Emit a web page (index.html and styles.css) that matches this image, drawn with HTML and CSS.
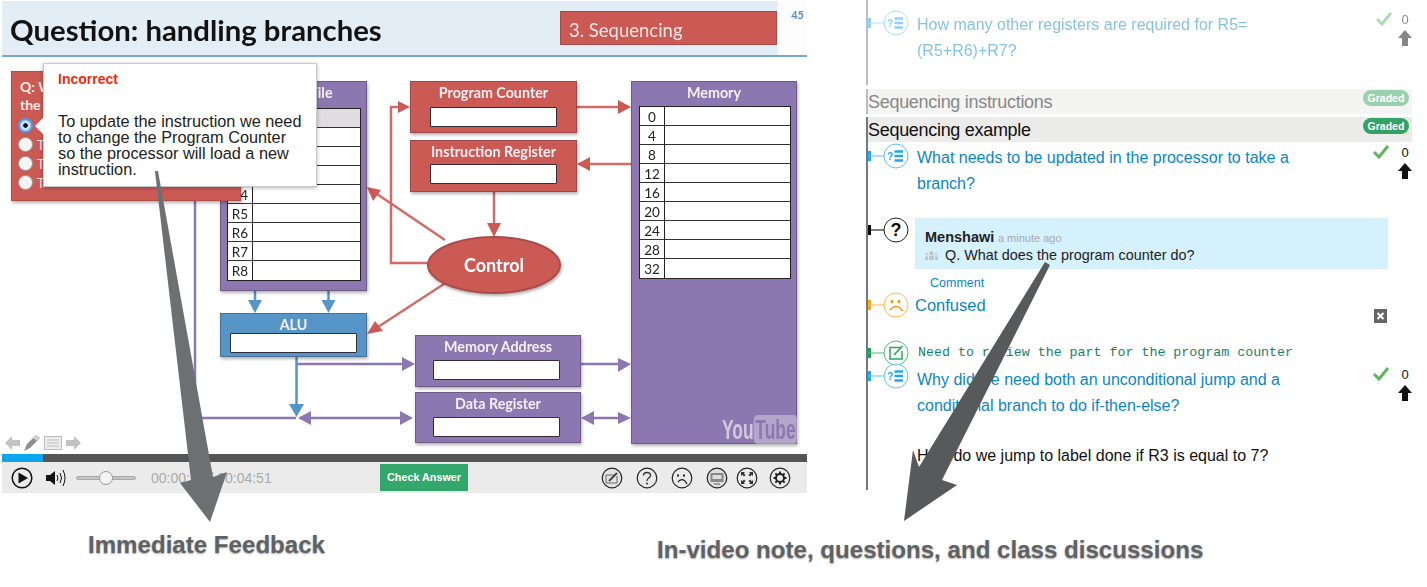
FILE: index.html
```html
<!DOCTYPE html>
<html lang="en">
<head>
    <meta charset="UTF-8">
    <meta name="viewport" content="width=device-width, initial-scale=1.0">
    <title>In-video quizzes</title>
    <link rel="stylesheet" href="styles.css">
</head>
<body>
<div class="page">
    <div class="top">
        <!-- Video player with the lecture slide -->
        <div class="player">
            <div class="slide">
                <div class="slide-head">
                    <h1 class="slide-title">Question: handling branches</h1>
                    <div class="slide-tag">3. Sequencing</div>
                    <div class="slide-num">45</div>
                </div>

                <!-- Diagram: wires first, nodes on top -->
                <svg class="wires" width="807" height="454" viewBox="0 0 807 454">
                    <g fill="none" stroke="#cf6c68" stroke-width="2.5">
                        <path d="M577 107H620"/>
                        <path d="M631 164H590"/>
                        <path d="M494 192V226"/>
                        <path d="M430 263H391V107H400"/>
                        <path d="M445 240L377 194"/>
                        <path d="M447 282L378 327"/>
                    </g>
                    <g fill="#cb5a55">
                        <path d="M631 107L618 100V114Z"/>
                        <path d="M577 164L590 157V171Z"/>
                        <path d="M494 237L487 223H501Z"/>
                        <path d="M410 107L398 101V113Z"/>
                        <path d="M367 187L381 190L373 201Z"/>
                        <path d="M367 334L375 321L383 331Z"/>
                    </g>
                    <g fill="none" stroke="#5595c8" stroke-width="2.5">
                        <path d="M255 291V304"/>
                        <path d="M328.500 291V304"/>
                        <path d="M296.500 357V406"/>
                    </g>
                    <g fill="#5595c8">
                        <path d="M255 313L248 300H262Z"/>
                        <path d="M328.500 313L321.500 300H335.500Z"/>
                        <path d="M296.500 417L289 404H304Z"/>
                    </g>
                    <g fill="none" stroke="#8d77b0" stroke-width="2.5">
                        <path d="M195 200V418H296"/>
                        <path d="M297 364H405"/>
                        <path d="M300 418H405"/>
                        <path d="M581 364H620"/>
                        <path d="M590 418H620"/>
                    </g>
                    <g fill="#8d77b0">
                        <path d="M415 364L402 357V371Z"/>
                        <path d="M298 418L311 411V425Z"/>
                        <path d="M413 418L400 411V425Z"/>
                        <path d="M631 364L618 358V372Z"/>
                        <path d="M631 418L618 412V424Z"/>
                        <path d="M581 418L594 411V425Z"/>
                    </g>
                </svg>

                <div class="node node-file">
                    <div class="node-title">Register File</div>
                    <div class="regs regs-file">
                        <div class="reg reg-on"><span></span><i></i></div>
                        <div class="reg"><span></span><i></i></div>
                        <div class="reg"><span></span><i></i></div>
                        <div class="reg"><span></span><i></i></div>
                        <div class="reg"><span>R4</span><i></i></div>
                        <div class="reg"><span>R5</span><i></i></div>
                        <div class="reg"><span>R6</span><i></i></div>
                        <div class="reg"><span>R7</span><i></i></div>
                        <div class="reg"><span>R8</span><i></i></div>
                    </div>
                </div>
                <div class="node node-pc"><div class="node-title">Program Counter</div><div class="field"></div></div>
                <div class="node node-ir"><div class="node-title">Instruction Register</div><div class="field"></div></div>
                <div class="node node-alu"><div class="node-title">ALU</div><div class="field"></div></div>
                <div class="node node-ma"><div class="node-title">Memory Address</div><div class="field"></div></div>
                <div class="node node-dr"><div class="node-title">Data Register</div><div class="field"></div></div>
                <div class="control">Control</div>
                <div class="node node-mem">
                    <div class="node-title">Memory</div>
                    <div class="regs regs-mem">
                        <div class="reg"><span>0</span><i></i></div>
                        <div class="reg"><span>4</span><i></i></div>
                        <div class="reg"><span>8</span><i></i></div>
                        <div class="reg"><span>12</span><i></i></div>
                        <div class="reg"><span>16</span><i></i></div>
                        <div class="reg"><span>20</span><i></i></div>
                        <div class="reg"><span>24</span><i></i></div>
                        <div class="reg"><span>28</span><i></i></div>
                        <div class="reg"><span>32</span><i></i></div>
                    </div>
                </div>
                <div class="yt">You<span class="yt-tube">Tube</span></div>

                <!-- Quiz laid over the video -->
                <div class="quiz">
                    <p class="quiz-q">Q: W<br>the</p>
                    <div class="quiz-opt"><span class="radio radio-on"></span></div>
                    <div class="quiz-opt"><span class="radio"></span>T</div>
                    <div class="quiz-opt"><span class="radio"></span>T</div>
                    <div class="quiz-opt"><span class="radio"></span>T</div>
                </div>
                <div class="popover">
                    <div class="popover-title">Incorrect</div>
                    <p class="popover-body">To update the instruction we need to change the Program Counter so the processor will load a new instruction.</p>
                </div>

                <div class="annot">
                    <svg width="15" height="14" viewBox="0 0 15 14"><path d="M0 7L7 0V4H15V10H7V14Z" fill="#c2c2c2"/></svg>
                    <svg width="16" height="16" viewBox="0 0 16 16"><path d="M0 16L3 9L12 0L16 3L6 13Z" fill="#8f8f8f"/><path d="M9 3L12 0L16 3L13 6Z" fill="#d0d0d0"/></svg>
                    <svg width="18" height="14" viewBox="0 0 18 14"><rect x=".5" y=".5" width="17" height="13" fill="#eee" stroke="#bbb"/><path d="M3 4H15M3 7H15M3 10H15" stroke="#bbb"/></svg>
                    <svg width="15" height="14" viewBox="0 0 15 14"><path d="M15 7L8 0V4H0V10H8V14Z" fill="#c2c2c2"/></svg>
                </div>
            </div>

            <div class="progress"><div class="progress-done"></div></div>
            <div class="controls">
                <svg class="ctl-play" width="22" height="22" viewBox="0 0 22 22"><circle cx="11" cy="11" r="9.800" fill="none" stroke="#111" stroke-width="1.500"/><path d="M7.500 5.500L17 11L7.500 16.500Z" fill="#111"/></svg>
                <svg class="ctl-vol" width="21" height="18" viewBox="0 0 21 18"><path d="M0 6H4L9 2V16L4 12H0Z" fill="#111"/><path d="M11 6Q13 9 11 12M14 4Q17 9 14 14M17 1Q21 9 17 17" fill="none" stroke="#111"/></svg>
                <div class="slider"><div class="slider-thumb"></div></div>
                <div class="time">00:00:57 / 00:04:51</div>
                <div class="check-btn">Check Answer</div>
                <div class="ctl-icons">
                    <svg width="22" height="22" viewBox="0 0 22 22"><circle cx="11" cy="11" r="9.800" fill="#e4e4e4" stroke="#222" stroke-width="1.200"/><path d="M5 8H14M5 8V16H16V9" fill="none" stroke="#666"/><path d="M8 14L16 6" stroke="#444" stroke-width="2"/></svg>
                    <svg width="22" height="22" viewBox="0 0 22 22"><circle cx="11" cy="11" r="9.800" fill="none" stroke="#222" stroke-width="1.200"/><path d="M7.500 8.500C7.500 4.500 14.500 4.500 14.500 8.500C14.500 11 11 10.500 11 14" fill="none" stroke="#333" stroke-width="1.300"/><circle cx="11" cy="16.500" r="1" fill="#333"/></svg>
                    <svg width="22" height="22" viewBox="0 0 22 22"><circle cx="11" cy="11" r="9.800" fill="none" stroke="#222" stroke-width="1.200"/><path d="M7 7.500V9.500M13 7.500V9.500" stroke="#222" stroke-width="2"/><path d="M7 15Q10 11 14 14L16 17" fill="none" stroke="#222" stroke-width="1.300"/></svg>
                    <svg width="22" height="22" viewBox="0 0 22 22"><circle cx="11" cy="11" r="9.800" fill="#ddd" stroke="#222" stroke-width="1.200"/><rect x="4.500" y="6" width="13" height="9" fill="#888"/><rect x="6.500" y="8" width="9" height="4" fill="#ddd"/><path d="M8 17H14" stroke="#888" stroke-width="1.500"/></svg>
                    <svg class="ctl-tight" width="22" height="22" viewBox="0 0 22 22"><circle cx="11" cy="11" r="9.800" fill="none" stroke="#222" stroke-width="1.200"/><path d="M5 5H9L7.800 6.300L9.500 8L8 9.500L6.300 7.800L5 9ZM17 5V9L15.700 7.800L14 9.500L12.500 8L14.200 6.300L13 5ZM5 17V13L6.300 14.200L8 12.500L9.500 14L7.800 15.700L9 17ZM17 17H13L14.200 15.700L12.500 14L14 12.500L15.700 14.200L17 13Z" fill="#333"/></svg>
                    <svg class="ctl-gear" width="22" height="22" viewBox="0 0 22 22"><circle cx="11" cy="11" r="9.800" fill="none" stroke="#222" stroke-width="1.200"/><circle cx="11" cy="11" r="3.800" fill="none" stroke="#222" stroke-width="2.400"/><path d="M11 4.500V17.500M4.500 11H17.500M6.400 6.400L15.600 15.600M15.600 6.400L6.400 15.600" stroke="#222" stroke-width="2"/><circle cx="11" cy="11" r="3" fill="#ebebeb"/></svg>
                </div>
            </div>
        </div>

        <!-- Timeline of questions and notes -->
        <div class="timeline">
            <div class="section section-past">
                <div class="item item-first">
                    <svg class="marker" width="42" height="26" viewBox="0 0 42 26"><rect y="8" width="3" height="10" fill="#1ea7f5"/><path d="M0 13H16" stroke="#5cbcf5"/><circle cx="28" cy="13" r="12" fill="#fff" stroke="#5cbcf5"/><text x="19" y="17" class="mark-q">?</text><path d="M26.500 8.500H35M26.500 13H35M26.500 17.500H35" stroke="#1ea7f5" stroke-width="2.500"/></svg>
                    <div class="item-text">How many other registers are required for R5= (R5+R6)+R7?</div>
                    <div class="votes">
                        <div class="votes-top">
                            <svg width="18" height="16" viewBox="0 0 18 16"><path d="M2 8L7 13L16 2" fill="none" stroke="#62b45f" stroke-width="3"/></svg>
                            <span class="votes-num">0</span>
                        </div>
                        <svg width="14" height="18" viewBox="0 0 14 18"><path d="M7 1L14 9H10V17H4V9H0Z" fill="#111"/></svg>
                    </div>
                </div>
            </div>
            <div class="bar bar-past"><span>Sequencing instructions</span><span class="pill">Graded</span></div>

            <div class="section section-now">
                <div class="bar"><span>Sequencing example</span><span class="pill">Graded</span></div>
                <div class="item item-a">
                    <svg class="marker" width="42" height="26" viewBox="0 0 42 26"><rect y="8" width="3" height="10" fill="#1ea7f5"/><path d="M0 13H16" stroke="#5cbcf5"/><circle cx="28" cy="13" r="12" fill="#fff" stroke="#5cbcf5"/><text x="19" y="17" class="mark-q">?</text><path d="M26.500 8.500H35M26.500 13H35M26.500 17.500H35" stroke="#1ea7f5" stroke-width="2.500"/></svg>
                    <div class="item-text">What needs to be updated in the processor to take a branch?</div>
                    <div class="votes">
                        <div class="votes-top">
                            <svg width="18" height="16" viewBox="0 0 18 16"><path d="M2 8L7 13L16 2" fill="none" stroke="#62b45f" stroke-width="3"/></svg>
                            <span class="votes-num">0</span>
                        </div>
                        <svg width="14" height="18" viewBox="0 0 14 18"><path d="M7 1L14 9H10V17H4V9H0Z" fill="#111"/></svg>
                    </div>
                </div>

                <div class="item item-b">
                    <svg class="marker" width="42" height="26" viewBox="0 0 42 26"><rect y="8" width="3" height="10" fill="#000"/><path d="M0 13H16" stroke="#000"/><circle cx="28" cy="13" r="12" fill="#fff" stroke="#222"/><text x="28" y="19" class="mark-big">?</text></svg>
                    <div class="thread">
                        <div class="card">
                            <div><b class="card-name">Menshawi</b> <span class="card-time">a minute ago</span></div>
                            <div class="card-q">
                                <svg width="13" height="9" viewBox="0 0 13 9"><circle cx="6.500" cy="2" r="1.800" fill="#bcbcbc"/><circle cx="2" cy="3" r="1.500" fill="#cfcfcf"/><circle cx="11" cy="3" r="1.500" fill="#cfcfcf"/><path d="M4 9V4.500H9V9ZM0 9V5.500H3V9ZM10 9V5.500H13V9Z" fill="#c4c4c4"/></svg>
                                Q. What does the program counter do?
                            </div>
                        </div>
                        <div class="comment-link">Comment</div>
                    </div>
                </div>

                <div class="item item-c">
                    <svg class="marker" width="42" height="26" viewBox="0 0 42 26"><rect y="8" width="3" height="10" fill="#ffa514"/><path d="M0 13H16" stroke="#ffb84d"/><circle cx="28" cy="13" r="12" fill="#fff" stroke="#ffb84d"/><path d="M24 8V11M31 8V11" stroke="#f59a0c" stroke-width="2.400"/><path d="M22 18Q27 12 32 16L35 19" fill="none" stroke="#f59a0c" stroke-width="1.400"/></svg>
                    <div class="item-confused">Confused</div>
                    <div class="close-box">
                        <svg width="13" height="14" viewBox="0 0 13 14"><rect width="13" height="14" fill="#666"/><path d="M3.500 4L9.500 10M9.500 4L3.500 10" stroke="#fff" stroke-width="2"/></svg>
                    </div>
                </div>

                <div class="item item-d">
                    <svg class="marker" width="42" height="26" viewBox="0 0 42 26"><rect y="8" width="3" height="10" fill="#13a651"/><path d="M0 13H16" stroke="#4fbb7b"/><circle cx="28" cy="13" r="12" fill="#fff" stroke="#4fbb7b"/><path d="M32 7.500H22V19H34V11" fill="none" stroke="#2aa764" stroke-width="1.500"/><path d="M26 15L34.500 6" stroke="#2aa764" stroke-width="1.800"/></svg>
                    <div class="item-note">Need to review the part for the program counter</div>
                </div>

                <div class="item item-e">
                    <svg class="marker" width="42" height="26" viewBox="0 0 42 26"><rect y="8" width="3" height="10" fill="#1ea7f5"/><path d="M0 13H16" stroke="#5cbcf5"/><circle cx="28" cy="13" r="12" fill="#fff" stroke="#5cbcf5"/><text x="19" y="17" class="mark-q">?</text><path d="M26.500 8.500H35M26.500 13H35M26.500 17.500H35" stroke="#1ea7f5" stroke-width="2.500"/></svg>
                    <div class="item-text">Why did we need both an unconditional jump and a conditional branch to do if-then-else?</div>
                    <div class="votes">
                        <div class="votes-top">
                            <svg width="18" height="16" viewBox="0 0 18 16"><path d="M2 8L7 13L16 2" fill="none" stroke="#62b45f" stroke-width="3"/></svg>
                            <span class="votes-num">0</span>
                        </div>
                        <svg width="14" height="18" viewBox="0 0 14 18"><path d="M7 1L14 9H10V17H4V9H0Z" fill="#111"/></svg>
                    </div>
                </div>

                <div class="item-plain">How do we jump to label done if R3 is equal to 7?</div>
            </div>
        </div>
    </div>

    <div class="captions">
        <div class="caption caption-a">Immediate Feedback</div>
        <div class="caption caption-b">In-video note, questions, and class discussions</div>
    </div>

    <!-- Big annotation arrows drawn over everything -->
    <svg class="callouts" width="1427" height="587" viewBox="0 0 1427 587">
        <path d="M155 171L158 171L213 477L227 472L210 522L180 483L191 480Z" fill="#6c7073"/>
        <path d="M1045 262L1050 265L942 480L957 485L904 521L913 450L919 467Z" fill="#58595b"/>
    </svg>
</div>
</body>
</html>
```

FILE: styles.css
```css
body {
    margin: 0;
    background: #fff;
    font-family: "Liberation Sans", Arial, sans-serif;
    color: #111;
}

.page {
    position: relative;
    width: 1427px;
    height: 587px;
    overflow: hidden;
}

.top {
    display: flex;
    align-items: flex-start;
    height: 493px;
}

/* Player */
.player {
    width: 807px;
    flex: none;
}

.slide {
    position: relative;
    height: 454px;
    padding-top: 1px;
    box-sizing: border-box;
    overflow: hidden;
    font-family: Lato, "Open Sans", sans-serif;
}

/* the slide is a soft video frame, the quiz popover is not */
.slide-head,
.wires,
.node,
.control,
.yt {
    filter: blur(0.35px);
}

.slide-head {
    display: flex;
    align-items: flex-start;
    margin-left: 2px;
    height: 54px;
    border-bottom: 2px solid #78a6d0;
    background: linear-gradient(to right, #e3edf5 776px, #fdfdfd 776px);
}

.slide-title {
    margin: 11px 0 0 8px;
    font-size: 29.300px;
    line-height: 36px;
    font-weight: 700;
    color: #111;
    white-space: nowrap;
}

.slide-tag {
    margin: 10px 0 0 auto;
    width: 217px;
    height: 34px;
    box-sizing: border-box;
    padding-left: 8px;
    background: #cb5a55;
    border: 1px solid #a94b48;
    color: #f4e6e4;
    font-size: 18.500px;
    line-height: 37px;
}

.slide-num {
    width: 30px;
    margin-top: 7px;
    text-align: right;
    padding-right: 3px;
    box-sizing: border-box;
    color: #5b8db8;
    font-size: 11px;
    font-weight: 700;
}

.wires {
    position: absolute;
    left: 0;
    top: 0;
}

.node {
    position: absolute;
    box-sizing: border-box;
    border: 1px solid rgba(60, 40, 60, 0.35);
    box-shadow: 1px 2px 3px rgba(0, 0, 0, 0.3);
    background: #cb5a55;
}

.node-title {
    text-align: center;
    color: #f6eef2;
    font-size: 14.300px;
    font-weight: 700;
    line-height: 22px;
}

.field {
    position: absolute;
    box-sizing: border-box;
    width: 127px;
    height: 20px;
    background: #fff;
    border: 1.500px solid #332c3a;
    border-radius: 1px;
}

.node-pc { left: 410px; top: 81px; width: 167px; height: 52px; }
.node-ir { left: 410px; top: 140px; width: 167px; height: 52px; }
.node-pc .field { left: 19px; top: 25px; }
.node-ir .field { left: 19px; top: 23px; }

.node-alu { left: 220px; top: 313px; width: 147px; height: 44px; background: #5595c8; }
.node-alu .field { left: 9px; top: 19px; }

.node-ma { left: 415px; top: 335px; width: 166px; height: 52px; background: #8d77b0; }
.node-dr { left: 415px; top: 392px; width: 166px; height: 51px; background: #8d77b0; }
.node-ma .field { left: 17px; top: 24px; }
.node-dr .field { left: 17px; top: 24px; }

.node-file { left: 220px; top: 81px; width: 147px; height: 210px; background: #8d77b0; }
.node-mem { left: 631px; top: 81px; width: 166px; height: 363px; background: #8d77b0; }

.regs {
    position: absolute;
    box-sizing: border-box;
    background: #fff;
    border: 1px solid #222;
    display: grid;
    grid-auto-rows: 19px;
}

.regs-file { left: 6px; top: 26px; width: 134px; }
.regs-mem { left: 7px; top: 24px; width: 152px; }

.reg {
    display: grid;
    grid-template-columns: 25px 1fr;
    border-bottom: 1px solid #333;
    box-sizing: border-box;
}

.reg:last-child {
    border-bottom: none;
}

.reg span {
    border-right: 1px solid #222;
    text-align: center;
    font-size: 13.500px;
    line-height: 20px;
    color: #222;
}

.reg-on i {
    background: #e0dde0;
}

.control {
    position: absolute;
    left: 427px;
    top: 236px;
    width: 134px;
    height: 58px;
    box-sizing: border-box;
    border: 2px solid #a94b48;
    border-radius: 50%;
    background: #cb5a55;
    box-shadow: 1px 2px 3px rgba(0, 0, 0, 0.3);
    color: #fff;
    text-align: center;
    font-size: 18px;
    font-weight: 700;
    line-height: 54px;
}

.yt {
    position: absolute;
    left: 722px;
    top: 415px;
    display: flex;
    height: 29px;
    color: rgba(255, 255, 255, 0.6);
    font-family: "Liberation Sans", sans-serif;
    font-size: 28px;
    font-weight: 700;
    line-height: 29px;
    white-space: nowrap;
    transform-origin: left;
    transform: scaleX(0.62);
}

.yt-tube {
    padding: 0 3px;
    background: rgba(255, 255, 255, 0.35);
    color: #8d77b0;
    border-radius: 6px;
}

/* Quiz overlay */
.quiz {
    position: absolute;
    left: 11px;
    top: 71px;
    width: 230px;
    height: 130px;
    box-sizing: border-box;
    padding: 6px 0 0 6px;
    background: #cb5a55;
    border: 1px solid #b04e4a;
    box-shadow: 1px 2px 3px rgba(0, 0, 0, 0.3);
    color: #f6eaea;
}

.quiz-q {
    margin: 0 0 0 2px;
    height: 38px;
    font-size: 14px;
    font-weight: 700;
    line-height: 18px;
}

.quiz-opt {
    display: flex;
    align-items: center;
    gap: 4px;
    height: 19px;
    font-size: 13px;
}

.radio {
    width: 15px;
    height: 15px;
    box-sizing: border-box;
    border-radius: 50%;
    background: #f4f4f4;
    border: 1px solid #999;
}

.radio-on {
    background: radial-gradient(circle, #111 0 2px, #cfe8fb 2.500px, #8cc6f2 100%);
    border: 2px solid #5a97d8;
}

.popover {
    position: absolute;
    left: 43px;
    top: 63px;
    width: 274px;
    height: 124px;
    box-sizing: border-box;
    padding: 9px 12px 0 14px;
    background: #fff;
    border: 1px solid #c8c8c8;
    box-shadow: 0 1px 4px rgba(0, 0, 0, 0.3);
    font-family: "Liberation Sans", Arial, sans-serif;
}

.popover::before {
    content: "";
    position: absolute;
    left: -9px;
    top: 53px;
    border-style: solid;
    border-width: 9px 9px 9px 0;
    border-color: transparent #fff transparent transparent;
}

.popover-title {
    color: #f22a0a;
    font-size: 14px;
    font-weight: 700;
    line-height: 13px;
}

.popover-body {
    margin: 27px 0 0;
    color: #222;
    font-size: 16.300px;
    line-height: 16px;
}

.annot {
    position: absolute;
    left: 5px;
    top: 435px;
    display: flex;
    align-items: center;
    gap: 4px;
}

.progress {
    height: 8px;
    margin-left: 2px;
    background: #555;
}

.progress-done {
    width: 41px;
    height: 100%;
    background: #0ea5f0;
}

.controls {
    display: flex;
    align-items: center;
    height: 31px;
    margin-left: 2px;
    background: #ebebeb;
}

.ctl-play { margin-left: 9px; }
.ctl-vol { margin-left: 13px; }

.slider {
    position: relative;
    margin-left: 9px;
    width: 60px;
    height: 4px;
    background: #c4c4c4;
    border: 1px solid #aaa;
    border-radius: 3px;
    box-sizing: border-box;
}

.slider-thumb {
    position: absolute;
    left: 22px;
    top: -6px;
    width: 14px;
    height: 14px;
    box-sizing: border-box;
    border-radius: 50%;
    background: #f4f4f4;
    border: 1px solid #999;
}

.time {
    margin-left: 15px;
    width: 229px;
    color: #aaa;
    font-size: 14px;
}

.check-btn {
    width: 88px;
    height: 27px;
    background: #34a86c;
    color: #fff;
    font-size: 10.800px;
    font-weight: 700;
    line-height: 27px;
    text-align: center;
}

.ctl-icons {
    display: flex;
    align-items: center;
    gap: 13px;
    margin-left: auto;
    padding-right: 16px;
}

.ctl-icons .ctl-tight { margin-left: -5px; }
.ctl-icons .ctl-gear { margin-left: -2px; }

/* Timeline */
.timeline {
    width: 546px;
    flex: none;
    margin-left: 59px;
}

.section {
    border-left: 2px solid #6d7a86;
    box-sizing: border-box;
}

.section-past {
    height: 85px;
    margin-bottom: 4px;
    border-left-color: #b8bfc6;
}

.section-past .item {
    opacity: 0.5;
}

.section-now {
    height: 373px;
    margin-top: 3px;
}

.bar {
    display: flex;
    justify-content: space-between;
    height: 25px;
    background: #ebebe9;
    font-size: 18px;
    line-height: 27px;
    color: #111;
    letter-spacing: -0.300px;
}

.pill {
    align-self: flex-start;
    margin: 1px 3px 0 0;
    width: 46px;
    height: 16px;
    border-radius: 8px;
    background: #34a266;
    color: #fff;
    font-size: 10.500px;
    font-weight: 700;
    letter-spacing: 0;
    line-height: 16px;
    text-align: center;
}

.bar-past {
    box-sizing: border-box;
    border-left: 2px solid #b8bfc6;
    background: #f4f4f2;
    color: #888;
}

.bar-past .pill {
    margin-top: 1px;
    background: #9bd0ae;
}

.item {
    display: flex;
    align-items: flex-start;
}

.marker {
    flex: none;
    margin-top: -1px;
}

.item-text {
    margin: 1px 0 0 7px;
    width: 380px;
    color: #0b85c9;
    font-size: 16px;
    line-height: 25.500px;
}

.item-first { padding-top: 11px; }
.item-a { padding-top: 2px; }
.item-b { margin-top: 22px; }
.item-c { margin-top: 2px; }
.item-d { margin-top: 18px; }
.item-e { margin-top: -2px; }
.item-e .item-text { margin-top: 3px; }
.item-e .marker { margin-top: -1px; }
.item-e .votes { margin-top: 3px; }

.votes {
    display: flex;
    flex-direction: column;
    align-items: flex-end;
    gap: 1px;
    margin-left: auto;
    margin-top: 1px;
}

.votes-top {
    display: flex;
    align-items: center;
    gap: 5px;
    margin-top: -3px;
}

.section-now .votes-top {
    gap: 8px;
}

.votes-num {
    width: 14px;
    text-align: center;
    font-size: 13px;
    line-height: 16px;
    margin-top: 3px;
}

.mark-q {
    font-family: "Liberation Sans", sans-serif;
    font-size: 10px;
    font-weight: 700;
    fill: #1ea7f5;
}

.mark-big {
    font-family: "Liberation Sans", sans-serif;
    font-size: 18px;
    font-weight: 700;
    text-anchor: middle;
    fill: #111;
}

.thread {
    margin-left: 5px;
    width: 473px;
}

.card {
    height: 51px;
    box-sizing: border-box;
    padding: 11px 10px 0 10px;
    background: #d5f1fd;
    font-size: 13px;
    line-height: 17px;
}

.card-name {
    color: #222;
    font-size: 14.500px;
}

.card-time {
    color: #aaa;
    font-size: 11px;
}

.card-q {
    display: flex;
    align-items: center;
    gap: 7px;
    margin-top: 0;
    color: #222;
    font-size: 14.400px;
}

.comment-link {
    margin-top: 6px;
    padding-left: 15px;
    color: #0b85c9;
    font-size: 12.500px;
    line-height: 16px;
}

.item-confused {
    margin-left: 5px;
    color: #0b85c9;
    font-size: 16.500px;
    line-height: 26px;
    margin-top: -1px;
}

.close-box {
    margin: 16px 25px 0 auto;
    line-height: 0;
}

.item-note {
    margin-left: 8px;
    color: #17806f;
    font-family: "Liberation Mono", "Courier New", monospace;
    font-size: 13.300px;
    line-height: 26px;
    margin-top: -1px;
}

.item-plain {
    margin: 25px 0 0 49px;
    font-size: 16px;
    line-height: 26px;
    color: #111;
}

/* Captions */
.captions {
    display: flex;
    align-items: flex-start;
}

.caption {
    color: #5f6163;
    font-size: 24.100px;
    font-weight: 700;
    white-space: nowrap;
    text-shadow: 0 1px 2px rgba(0, 0, 0, 0.35);
}

.caption-a {
    margin: 38px 0 0 88px;
}

.caption-b {
    margin: 43px 0 0 332px;
}

.callouts {
    position: absolute;
    left: 0;
    top: 0;
    pointer-events: none;
}
```
